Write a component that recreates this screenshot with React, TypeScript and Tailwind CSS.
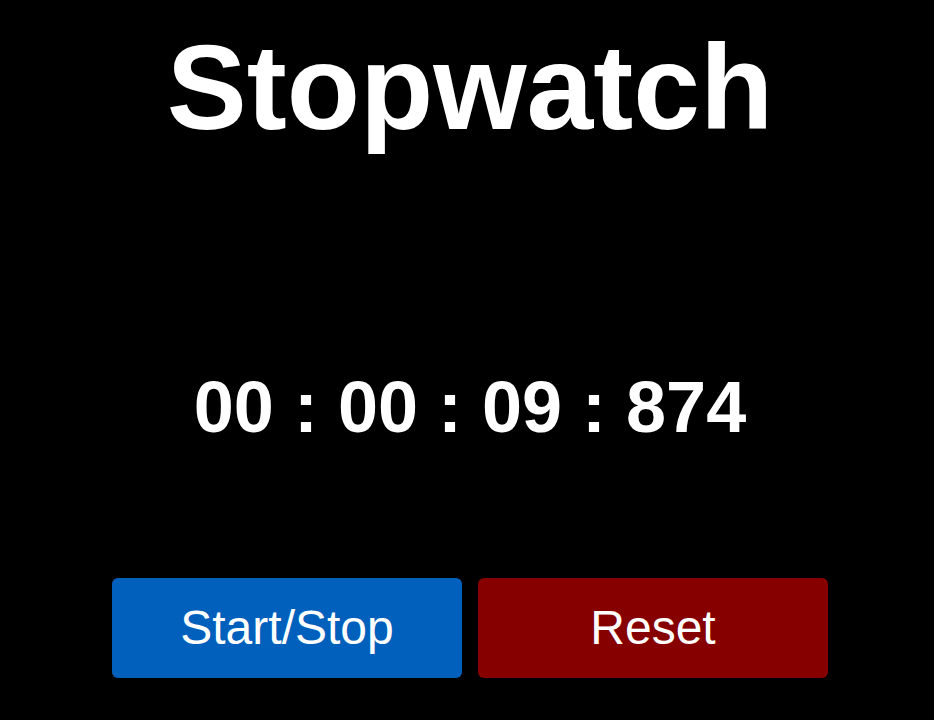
import { useState } from 'react'

export default function App() {
  const [time] = useState('00 : 00 : 09 : 874')

  return (
    <div
      className="min-h-[720px] w-full bg-black text-white pl-[6px]"
      style={{ fontFamily: '"Liberation Sans", Arial, sans-serif' }}
    >
      <div className="flex flex-col items-center">
        <h1 className="mt-[18px] text-[120px] font-bold leading-[138px]">Stopwatch</h1>
        <div className="mt-[210px] text-[72px] font-bold leading-[83px]">{time}</div>
        <div className="mt-[129px] flex gap-4">
          <button className="h-[100px] w-[350px] rounded-md bg-[#0060bc] text-[48px] text-white">
            Start/Stop
          </button>
          <button className="h-[100px] w-[350px] rounded-md bg-[#870000] text-[48px] text-white">
            Reset
          </button>
        </div>
      </div>
    </div>
  )
}
